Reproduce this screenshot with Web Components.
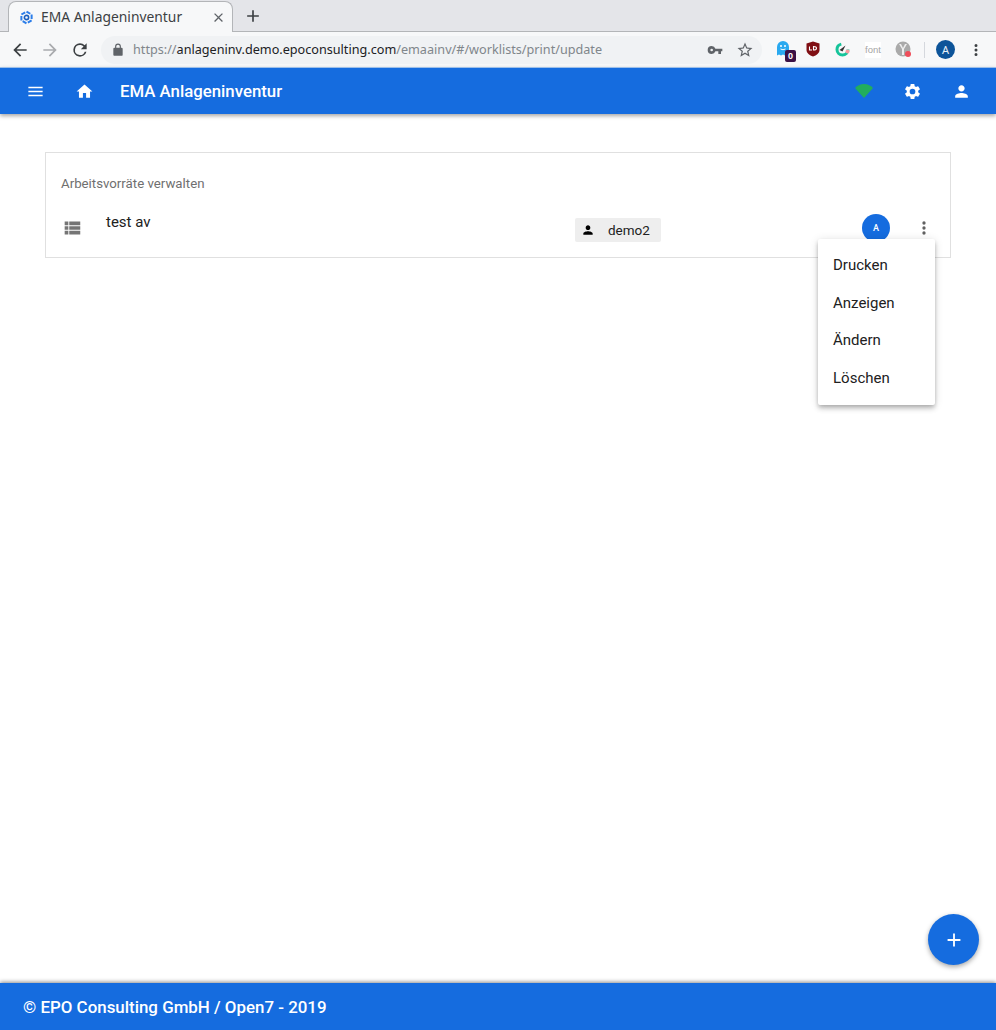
<!DOCTYPE html>
<html lang="de"><head><meta charset="utf-8"><title>EMA Anlageninventur</title>
<style>
html,body{margin:0;height:100%;background:#fff;overflow:hidden}
body{display:flex;flex-direction:column;height:1030px;font-family:Roboto,"Liberation Sans",sans-serif}
</style></head><body>
<browser-chrome></browser-chrome>
<app-bar title="EMA Anlageninventur"></app-bar>
<app-main>
  <work-card heading="Arbeitsvorräte verwalten">
    <work-row name="test av" user="demo2"></work-row>
  </work-card>
</app-main>
<app-footer>© EPO Consulting GmbH / Open7 - 2019</app-footer>
<script>
const I={
 menu:'<path d="M3 18h18v-2H3v2zm0-5h18v-2H3v2zm0-7v2h18V6H3z"/>',
 home:'<path d="M10 20v-6h4v6h5v-8h3L12 3 2 12h3v8z"/>',
 gear:'<path d="M19.14 12.94c.04-.3.06-.61.06-.94 0-.32-.02-.64-.07-.94l2.03-1.58a.49.49 0 0 0 .12-.61l-1.92-3.32a.49.49 0 0 0-.59-.22l-2.39.96c-.5-.38-1.03-.7-1.62-.94l-.36-2.54a.48.48 0 0 0-.48-.41h-3.84a.48.48 0 0 0-.47.41l-.36 2.54c-.59.24-1.13.57-1.62.94l-2.39-.96a.48.48 0 0 0-.59.22L2.74 8.87a.48.48 0 0 0 .12.61l2.03 1.58c-.05.3-.09.63-.09.94s.02.64.07.94l-2.03 1.58a.49.49 0 0 0-.12.61l1.92 3.32c.12.22.37.29.59.22l2.39-.96c.5.38 1.03.7 1.62.94l.36 2.54c.05.24.24.41.48.41h3.84c.24 0 .44-.17.47-.41l.36-2.54c.59-.24 1.13-.56 1.62-.94l2.39.96c.22.08.47 0 .59-.22l1.92-3.32a.48.48 0 0 0-.12-.61l-2.01-1.58zM12 15.6A3.6 3.6 0 1 1 12 8.4a3.6 3.6 0 0 1 0 7.2z"/>',
 person:'<path d="M12 12c2.21 0 4-1.79 4-4s-1.79-4-4-4-4 1.79-4 4 1.79 4 4 4zm0 2c-2.67 0-8 1.34-8 4v2h16v-2c0-2.66-5.33-4-8-4z"/>',
 list:'<path d="M4 14h4v-4H4v4zm0 5h4v-4H4v4zM4 9h4V5H4v4zm5 5h12v-4H9v4zm0 5h12v-4H9v4zM9 5v4h12V5H9z"/>',
 dots:'<path d="M12 8a2 2 0 1 0 0-4 2 2 0 0 0 0 4zm0 2a2 2 0 1 0 0 4 2 2 0 0 0 0-4zm0 6a2 2 0 1 0 0 4 2 2 0 0 0 0-4z"/>',
 plus:'<path d="M19 13h-6v6h-2v-6H5v-2h6V5h2v6h6v2z"/>',
 back:'<path d="M20 11H7.83l5.59-5.59L12 4l-8 8 8 8 1.41-1.41L7.83 13H20v-2z"/>',
 fwd:'<path d="M12 4l-1.41 1.41L16.17 11H4v2h12.17l-5.58 5.59L12 20l8-8z"/>',
 reload:'<path d="M17.65 6.35A7.96 7.96 0 0 0 12 4a8 8 0 1 0 7.73 10h-2.08A6 6 0 1 1 12 6c1.66 0 3.14.69 4.22 1.78L13 11h7V4l-2.35 2.35z"/>',
 lock:'<path d="M18 8h-1V6a5 5 0 0 0-10 0v2H6a2 2 0 0 0-2 2v10c0 1.1.9 2 2 2h12a2 2 0 0 0 2-2V10a2 2 0 0 0-2-2zM9 6a3 3 0 0 1 6 0v2H9V6z"/>',
 key:'<path d="M12.65 10A6 6 0 0 0 7 6a6 6 0 0 0 0 12 6 6 0 0 0 5.65-4H17v4h4v-4h2v-4H12.65zM7 14a2 2 0 1 1 0-4 2 2 0 0 1 0 4z"/>',
 star:'<path d="M22 9.24l-7.19-.62L12 2 9.19 8.63 2 9.24l5.46 4.73L5.82 21 12 17.27 18.18 21l-1.63-7.03L22 9.24zM12 15.4l-3.76 2.27 1-4.28-3.32-2.88 4.38-.38L12 6.1l1.71 4.04 4.38.38-3.32 2.88 1 4.28L12 15.4z"/>',
 close:'<path d="M19 6.41L17.59 5 12 10.59 6.41 5 5 6.41 10.59 12 5 17.59 6.41 19 12 13.41 17.59 19 19 17.59 13.41 12z"/>'
};
const svg=(n,s,c)=>`<svg width="${s}" height="${s}" viewBox="0 0 24 24" fill="${c}" style="display:block;flex:none">${I[n]}</svg>`;
function def(name,fn){customElements.define(name,class extends HTMLElement{connectedCallback(){if(this.shadowRoot)return;this.attachShadow({mode:'open'}).innerHTML=fn(this)}})}

def('browser-chrome',()=>`<style>
:host{display:block;flex:none;font-family:"Noto Sans","Open Sans",sans-serif}
.strip{height:31px;background:#e4e5e9;border-bottom:1px solid #b3b5b8;display:flex;align-items:flex-end;padding-left:8px}
.tab{width:225px;height:31px;margin-bottom:-1px;box-sizing:border-box;background:#f7f8f9;border:1px solid #b3b5b8;border-bottom:0;border-radius:8px 8px 0 0;display:flex;align-items:center;padding:0 6px 0 10px;font-size:13.850px;color:#3c4043}
.tab span{flex:1;margin-left:7px;margin-top:-1px;white-space:nowrap}
.new{margin:0 0 0 10px;height:31px;display:flex;align-items:center}
.bar{height:35px;background:#f7f8f9;display:flex;align-items:center;position:relative}
.nav{display:flex;gap:10px;padding-left:10px;width:91px;box-sizing:border-box}
.omni{width:661px;height:28px;border-radius:14px;background:#f0f2f4;display:flex;align-items:center;margin-left:10px;font-size:12.650px;white-space:nowrap;color:#202124;box-sizing:border-box;padding-left:10px}
.omni .u{color:#80868b;margin:-2px 0 0 8px}.omni b{font-weight:400;color:#202124}
.omni .gap{flex:1}
.ext{display:flex;align-items:center;flex:1}
</style>
<div class="strip"><div class="tab">
<svg width="15" height="15" viewBox="0 0 24 24" fill="none" stroke="#2b7de9" stroke-width="3.200" style="flex:none"><path d="M12 2.500l8.200 4.750v9.500L12 21.500l-8.200-4.750v-9.500z" stroke-dasharray="7 2.500"/><circle cx="12" cy="12" r="3.400" stroke="#1a5fc0" stroke-width="2.600"/></svg>
<span>EMA Anlageninventur</span>${svg('close',15,'#5f6368')}</div>
<div class="new">${svg('plus',20,'#3c4043')}</div></div>
<div class="bar"><div class="nav">${svg('back',20,'#3c4043')}${svg('fwd',20,'#a9abae')}${svg('reload',20,'#3c4043')}</div>
<div class="omni">${svg('lock',14,'#5f6368')}<div class="u">https://<b>anlageninv.demo.epoconsulting.com</b>/emaainv/#/worklists/print/update</div><div class="gap"></div>
<div style="margin-right:13px">${svg('key',16,'#5f6368')}</div><div style="margin-right:8px">${svg('star',18,'#5f6368')}</div></div>
<div class="ext" style="position:relative;height:35px">
<svg width="14" height="17" viewBox="0 0 14 17" style="margin:-2px 0 0 14px;flex:none"><path d="M1 7a6 6 0 0 1 12 0v8.500l-2-1-2 1-2-1-2 1-2-1-2 1z" fill="#29a9f0"/><circle cx="5" cy="6" r="1" fill="#fff"/><circle cx="9" cy="6" r="1" fill="#fff"/><path d="M4.500 9q2.500 1.500 5 0" stroke="#fff" fill="none"/></svg>
<span style="position:absolute;left:23px;top:18px;width:11px;height:12px;background:#3b1145;color:#fff;border-radius:2px;font:700 9px/12px 'Liberation Sans',sans-serif;text-align:center">0</span>
<svg width="14" height="16" viewBox="0 0 14 16" style="margin:-2px 0 0 16px;flex:none"><path d="M7 .5l6.500 2v6.500c0 3-3 5.500-6.500 6.500-3.500-1-6.500-3.500-6.500-6.500V2.500z" fill="#800f14"/><path d="M3.500 5.500v3.500h2.500M7.500 5.500v3.500c2 0 3-.6 3-1.800S9.500 5.500 7.500 5.500z" stroke="#fff" stroke-width="1.100" fill="none"/></svg>
<svg width="15" height="15" viewBox="0 0 15 15" style="margin-left:15px;flex:none"><circle cx="7.500" cy="7.500" r="5.500" fill="none" stroke="#16c49a" stroke-width="3" stroke-dasharray="24 11"/><path d="M4.500 8l6-4.500-3 6z" fill="#333"/><circle cx="12.500" cy="9.500" r="2" fill="#f79aa0"/></svg>
<span style="margin-left:15px;width:16px;font:9.500px/16px 'Liberation Sans',sans-serif;color:#a5a5a5;background:#fff;text-align:center">font</span>
<svg width="17" height="17" viewBox="0 0 17 17" style="margin-left:14px;flex:none"><circle cx="8" cy="8" r="7.500" fill="#aaa"/><path d="M4 3l3 5v6h2V8l3-5-2 0-2 4-2-4z" fill="#eee"/><circle cx="13" cy="13" r="3" fill="#ee4d5a"/></svg>
<span style="margin-left:12px;width:1px;height:16px;background:#d5d8dd"></span>
<span style="margin-left:11px;width:19px;height:19px;border-radius:50%;background:#0d5499;color:#e8f0f8;font:11px/19px 'Noto Sans',sans-serif;text-align:center">A</span>
<div style="margin-left:12px">${svg('dots',18,'#3c4043')}</div>
</div></div>`);

def('app-bar',h=>`<style>
:host{display:flex;flex:none;align-items:center;background:#156cdf;color:#fff;box-shadow:0 2px 4px rgba(0,0,0,.35);position:relative;z-index:2;padding:0 25px 0 26px;border-top:1px solid #9cbfe9;box-sizing:border-box;height:47px}
.t{font:500 16.800px Roboto,sans-serif;margin-left:26px;flex:1;white-space:nowrap}
.h{margin-left:30px}
.w{margin-right:30px}.g{margin-right:30px}
</style>${svg('menu',19,'#fff')}<div class="h">${svg('home',19,'#fff')}</div><div class="t">${h.getAttribute('title')}</div>
<svg class="w" width="18" height="14" viewBox="0 0 18 14" style="display:block"><path d="M0 4C2.500 1.500 5.500 0 9 0s6.500 1.500 9 4l-9 10z" fill="#22ad5c"/></svg>
<div class="g">${svg('gear',19,'#fff')}</div>${svg('person',19,'#fff')}`);

def('app-main',()=>`<style>:host{display:block;flex:1;padding:38px 45px 0;position:relative;min-height:0}
button{position:absolute;right:17px;bottom:18px;width:51px;height:51px;border-radius:50%;border:0;padding:0;background:#156cdf;box-shadow:0 2px 5px rgba(0,0,0,.35);display:flex;align-items:center;justify-content:center}</style>
<slot></slot><button aria-label="Neu">${svg('plus',22,'#fff')}</button>`);

def('work-card',h=>`<style>:host{display:block;height:106px;box-sizing:border-box;border:1px solid #e0e0e0;padding:23px 15px 0;position:relative}
h2{margin:0 0 17px;font:400 13.250px/15px Roboto,sans-serif;color:#6f6f6f}</style>
<h2>${h.getAttribute('heading')}</h2><slot></slot>`);

def('work-row',h=>`<style>
:host{display:grid;grid-template-columns:45px 469px 287px 1fr;height:50px;position:relative}
.ic{padding-top:9px}
.n{font:15px/20px Roboto,sans-serif;color:#212121;padding-top:4px}
.chip{display:inline-flex;align-items:center;height:24px;width:86px;background:#eee;border-radius:2px;box-sizing:border-box;padding-left:6px;margin-top:10px;font:13.500px Roboto,sans-serif;color:#212121}
.chip span{margin-left:13px}
.r{display:flex;align-items:flex-start;position:relative}
.av{width:28px;height:28px;border-radius:50%;background:#156cdf;color:#fff;font:500 9px/28px Roboto,sans-serif;text-align:center;margin-top:6px}
.more{margin:10px 0 0 24px}
.menu{position:absolute;left:-44px;top:31px;width:117px;height:166px;box-sizing:border-box;padding:8px 0;background:#fff;border-radius:2px;box-shadow:0 2px 4px -1px rgba(0,0,0,.2),0 4px 5px rgba(0,0,0,.14),0 1px 10px rgba(0,0,0,.12);z-index:3}
.menu div{height:37.500px;padding-left:15px;font:15px/37.500px Roboto,sans-serif;color:#212121}
</style>
<div class="ic">${svg('list',22,'#757575')}</div><div class="n">${h.getAttribute('name')}</div>
<div><div class="chip">${svg('person',14,'#000')}<span>${h.getAttribute('user')}</span></div></div>
<div class="r"><div class="av">A</div><div class="more">${svg('dots',20,'#616161')}</div>
<div class="menu"><div>Drucken</div><div>Anzeigen</div><div>Ändern</div><div>Löschen</div></div></div>`);

def('app-footer',()=>`<style>:host{display:flex;flex:none;align-items:center;height:47px;background:#156cdf;color:#fff;padding:0 23px;font:500 16.900px Roboto,sans-serif;box-shadow:0 -1px 4px rgba(0,0,0,.45);position:relative}</style><slot></slot>`);
</script>
</body></html>
